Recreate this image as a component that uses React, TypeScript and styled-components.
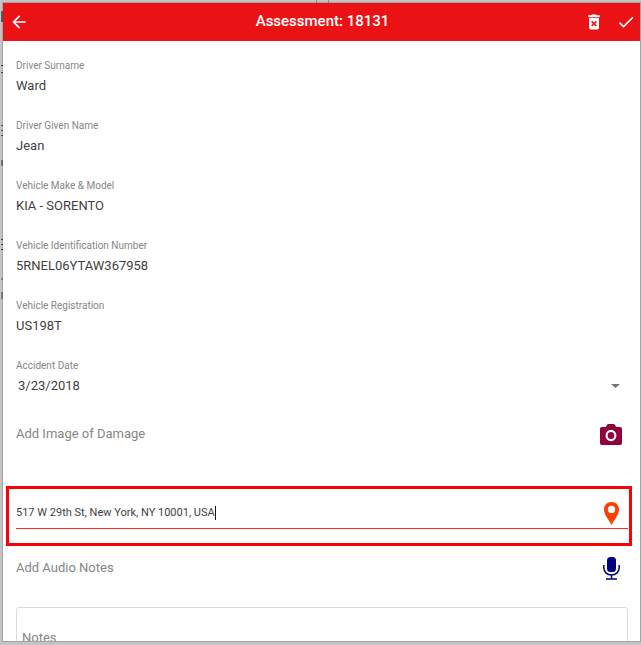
import React, { useState } from "react";
import styled, { createGlobalStyle } from "styled-components";

const GlobalStyle = createGlobalStyle`
  *, *::before, *::after { box-sizing: border-box; }
  body {
    margin: 0;
    background: #c4c4c4;
    font-family: Roboto, "Liberation Sans", sans-serif;
    color: #3f3f3f;
  }
`;

const Backdrop = styled.div`
  display: flex;
  height: 100vh;
  padding: 3px 1px 4px 3px;
  background:
    linear-gradient(#5f5f68, #5f5f68) 1px 11px / 2px 11px no-repeat,
    linear-gradient(#444, #444) 1px 65px / 2px 1px no-repeat,
    linear-gradient(#444, #444) 1px 72px / 2px 1px no-repeat,
    linear-gradient(#555, #555) 1px 125px / 2px 1px no-repeat,
    linear-gradient(#555, #555) 1px 130px / 2px 1px no-repeat,
    linear-gradient(#555, #555) 1px 135px / 2px 1px no-repeat,
    linear-gradient(#86756c, #86756c) 1px 160px / 2px 6px no-repeat,
    linear-gradient(#444, #444) 1px 239px / 2px 1px no-repeat,
    linear-gradient(#444, #444) 1px 244px / 2px 1px no-repeat,
    linear-gradient(#444, #444) 1px 249px / 2px 1px no-repeat,
    linear-gradient(#a87f7a, #a87f7a) 1px 278px / 2px 2px no-repeat,
    linear-gradient(#85808c, #85808c) 1px 292px / 2px 7px no-repeat,
    linear-gradient(#8c8c8c, #8c8c8c) 49.3% 0 / 1px 3px no-repeat,
    linear-gradient(#8c8c8c, #8c8c8c) 51.3% 0 / 1px 3px no-repeat,
    #c4c4c4;
`;

const Dialog = styled.div`
  display: flex;
  flex: 1;
  min-width: 0;
  flex-direction: column;
  overflow: hidden;
  background: #fff;
  box-shadow: 0 0 0 1px rgba(0, 0, 0, 0.16);
`;

const Header = styled.header`
  display: grid;
  grid-template-columns: 1fr auto 1fr;
  align-items: center;
  flex: none;
  height: 38px;
  padding: 0 4px 0 6px;
  background: #eb1215;
  color: #fff;
`;

const Title = styled.h1`
  margin: 0;
  padding-bottom: 2px;
  font-size: 15px;
  line-height: 20px;
  font-weight: 500;
`;

const Actions = styled.div<{ $end?: boolean }>`
  display: flex;
  gap: 12px;
  justify-content: ${(p) => (p.$end ? "flex-end" : "flex-start")};
`;

const IconButton = styled.button`
  display: flex;
  align-items: center;
  justify-content: center;
  flex: none;
  padding: 0;
  border: 0;
  background: none;
  color: inherit;
  cursor: pointer;
`;

const RowIconButton = styled(IconButton)`
  width: 24px;
`;

const Form = styled.form`
  display: flex;
  flex: 1;
  min-height: 0;
  flex-direction: column;
  overflow: hidden;
  padding: 19px 12px 0 13px;
`;

const Field = styled.div`
  display: flex;
  flex: none;
  flex-direction: column;
  gap: 4px;
  margin-bottom: 24px;
`;

const Label = styled.label`
  font-size: 10px;
  line-height: 12px;
  color: #868686;
`;

const TextInput = styled.input`
  width: 100%;
  height: 20px;
  padding: 0;
  border: 0;
  outline: 0;
  background: none;
  font: 13px/20px Roboto, "Liberation Sans", sans-serif;
  color: #3f3f3f;
`;

const DateButton = styled.button`
  display: flex;
  align-items: center;
  justify-content: space-between;
  height: 20px;
  padding: 0 8px 0 2px;
  border: 0;
  background: none;
  font: 13px/20px Roboto, "Liberation Sans", sans-serif;
  color: #3f3f3f;
`;

const MediaRow = styled.div`
  display: flex;
  flex: none;
  align-items: center;
  justify-content: space-between;
  height: 28px;
  padding-right: 5px;
  font-size: 13px;
  line-height: 20px;
  color: #868686;
`;

const Highlight = styled.div`
  flex: none;
  height: 60px;
  margin: 38px -4px 8px -10px;
  padding: 9px 1px 0 7px;
  border: 3px solid #fb0007;
`;

const AddressLine = styled.div`
  display: flex;
  align-items: center;
  height: 31px;
  padding-right: 5px;
  border-bottom: 1px solid #f9301f;
`;

const AddressText = styled.div`
  display: flex;
  flex: 1;
  align-items: center;
`;

const AddressInput = styled.input`
  field-sizing: content;
  padding: 0;
  border: 0;
  outline: 0;
  background: none;
  font: 11px/16px Roboto, "Liberation Sans", sans-serif;
  color: #3f3f3f;
`;

const Caret = styled.span`
  width: 1px;
  height: 14px;
  background: #111;
`;

const Notes = styled.textarea`
  flex: none;
  height: 90px;
  margin-top: 25px;
  padding: 20px 5px;
  border: 1px solid #dcdcdc;
  border-radius: 3px;
  outline: 0;
  resize: none;
  font: 13px/20px Roboto, "Liberation Sans", sans-serif;
  color: #3f3f3f;

  &::placeholder { color: #868686; opacity: 1; }
`;

const BackIcon = () => (
  <svg width="20" height="20" viewBox="0 0 24 24" fill="currentColor" aria-hidden="true">
    <path d="M20 11H7.83l5.59-5.59L12 4l-8 8 8 8 1.41-1.41L7.83 13H20v-2z" />
  </svg>
);

const DeleteIcon = () => (
  <svg width="20" height="20" viewBox="0 0 24 24" fill="currentColor" aria-hidden="true">
    <path d="M6 19c0 1.100.9 2 2 2h8c1.100 0 2-.9 2-2V7H6v12zm2.460-7.120 1.410-1.410L12 12.590l2.120-2.120 1.410 1.410L13.410 14l2.120 2.120-1.410 1.410L12 15.410l-2.120 2.120-1.410-1.410L10.590 14l-2.130-2.120zM15.500 4l-1-1h-5l-1 1H5v2h14V4z" />
  </svg>
);

const CheckIcon = () => (
  <svg width="20" height="20" viewBox="0 0 24 24" fill="currentColor" aria-hidden="true">
    <path d="M9 16.170 4.830 12l-1.420 1.410L9 19 21 7l-1.410-1.410z" />
  </svg>
);

const CameraIcon = () => (
  <svg width="22" height="21" viewBox="0 0 23 21" preserveAspectRatio="none" aria-hidden="true">
    <path fill="#90003c" fillRule="evenodd" d="M2 3h4l1.500-2.200Q8 0 9 0h5q1 0 1.500.8L17 3h4q2 0 2 2v14q0 2-2 2H2q-2 0-2-2V5q0-2 2-2zm9.500 2.800a5.700 5.700 0 1 0 0 11.400 5.700 5.700 0 1 0 0-11.400zm0 2.200a3.500 3.500 0 1 1 0 7 3.500 3.500 0 1 1 0-7z" />
  </svg>
);

const PinIcon = () => (
  <svg width="15" height="23" viewBox="0 0 15 23" aria-hidden="true">
    <path fill="#ff3d00" fillRule="evenodd" d="M7.500 0C3.300 0 0 3.200 0 7.400 0 12.800 5.200 18 7.500 23 9.800 18 15 12.800 15 7.400 15 3.200 11.700 0 7.500 0zm0 3.700a3.700 3.700 0 1 1 0 7.400 3.700 3.700 0 1 1 0-7.400z" />
  </svg>
);

const MicIcon = () => (
  <svg width="17" height="23" viewBox="0 0 17 23" aria-hidden="true">
    <rect x="4" y="0" width="9" height="15" rx="3.500" fill="#000080" />
    <path fill="none" stroke="#000080" strokeWidth="1.500" d="M.8 8v2.500c0 4.300 3.200 7.500 7.700 7.500s7.700-3.200 7.700-7.500V8M8.500 18v4M3 22h11" />
  </svg>
);

const DropIcon = () => (
  <svg width="9" height="4" viewBox="0 0 9 4" aria-hidden="true">
    <path d="M0 0h9L4.500 4z" fill="#757575" />
  </svg>
);

const details = [
  { id: "surname", label: "Driver Surname", value: "Ward" },
  { id: "given", label: "Driver Given Name", value: "Jean" },
  { id: "model", label: "Vehicle Make & Model", value: "KIA - SORENTO" },
  { id: "vin", label: "Vehicle Identification Number", value: "5RNEL06YTAW367958" },
  { id: "registration", label: "Vehicle Registration", value: "US198T" },
];

export default function App() {
  const [address, setAddress] = useState("517 W 29th St, New York, NY 10001, USA");

  return (
    <>
      <GlobalStyle />
      <Backdrop>
        <Dialog>
          <Header>
            <Actions>
              <IconButton type="button" aria-label="Back"><BackIcon /></IconButton>
            </Actions>
            <Title>Assessment: 18131</Title>
            <Actions $end>
              <IconButton type="button" aria-label="Delete"><DeleteIcon /></IconButton>
              <IconButton type="button" aria-label="Save"><CheckIcon /></IconButton>
            </Actions>
          </Header>
          <Form>
            {details.map((d) => (
              <Field key={d.id}>
                <Label htmlFor={d.id}>{d.label}</Label>
                <TextInput id={d.id} defaultValue={d.value} />
              </Field>
            ))}
            <Field>
              <Label htmlFor="date">Accident Date</Label>
              <DateButton id="date" type="button">
                3/23/2018
                <DropIcon />
              </DateButton>
            </Field>
            <MediaRow>
              <span>Add Image of Damage</span>
              <RowIconButton type="button" aria-label="Add image"><CameraIcon /></RowIconButton>
            </MediaRow>
            <Highlight>
              <AddressLine>
                <AddressText>
                  <AddressInput
                    aria-label="Address"
                    value={address}
                    onChange={(e) => setAddress(e.target.value)}
                  />
                  <Caret />
                </AddressText>
                <RowIconButton type="button" aria-label="Find location"><PinIcon /></RowIconButton>
              </AddressLine>
            </Highlight>
            <MediaRow>
              <span>Add Audio Notes</span>
              <RowIconButton type="button" aria-label="Record audio"><MicIcon /></RowIconButton>
            </MediaRow>
            <Notes aria-label="Notes" placeholder="Notes" />
          </Form>
        </Dialog>
      </Backdrop>
    </>
  );
}
